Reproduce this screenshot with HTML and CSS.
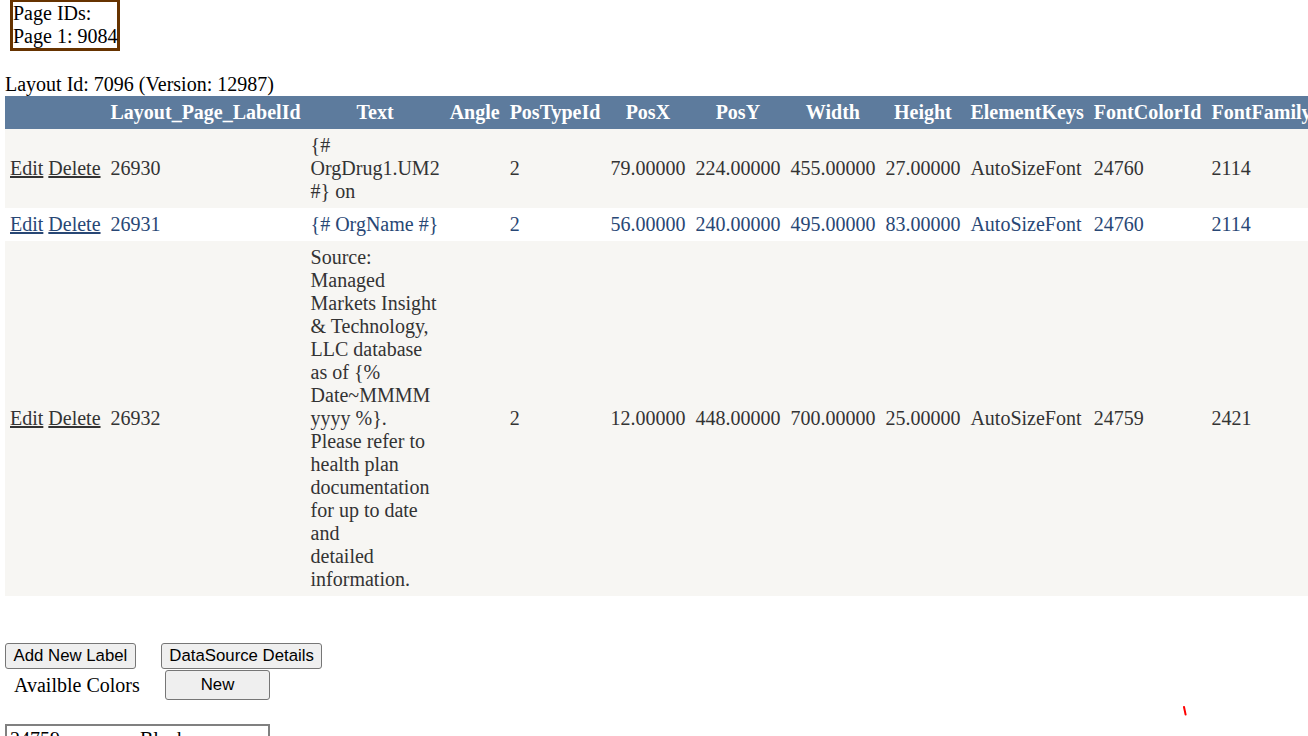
FILE: index.html
```html
<!DOCTYPE html>
<html>
<head>
<meta charset="utf-8">
<title>Layout Labels</title>
<link rel="stylesheet" href="styles.css">
</head>
<body>
<div class="page-ids">Page IDs:<br>Page 1: 9084</div>
<div class="layout-id">Layout Id: 7096 (Version: 12987)</div>
<table class="grid">
  <thead>
    <tr>
      <th></th>
      <th>Layout_Page_LabelId</th>
      <th>Text</th>
      <th>Angle</th>
      <th>PosTypeId</th>
      <th>PosX</th>
      <th>PosY</th>
      <th>Width</th>
      <th>Height</th>
      <th>ElementKeys</th>
      <th>FontColorId</th>
      <th>FontFamilyId</th>
      <th>FontSize</th>
      <th>FontStyleId</th>
      <th>AlignmentId</th>
    </tr>
  </thead>
  <tbody>
    <tr class="row">
      <td><a href="#">Edit</a> <a href="#">Delete</a></td>
      <td>26930</td>
      <td class="text">{# OrgDrug1.UM2 #} on</td>
      <td></td>
      <td>2</td>
      <td>79.00000</td>
      <td>224.00000</td>
      <td>455.00000</td>
      <td>27.00000</td>
      <td>AutoSizeFont</td>
      <td>24760</td>
      <td>2114</td>
      <td>14</td>
      <td>1</td>
      <td>1</td>
    </tr>
    <tr class="alt">
      <td><a href="#">Edit</a> <a href="#">Delete</a></td>
      <td>26931</td>
      <td class="text">{# OrgName #}</td>
      <td></td>
      <td>2</td>
      <td>56.00000</td>
      <td>240.00000</td>
      <td>495.00000</td>
      <td>83.00000</td>
      <td>AutoSizeFont</td>
      <td>24760</td>
      <td>2114</td>
      <td>28</td>
      <td>1</td>
      <td>1</td>
    </tr>
    <tr class="row">
      <td><a href="#">Edit</a> <a href="#">Delete</a></td>
      <td>26932</td>
      <td class="text">Source: Managed Markets Insight &amp; Technology, LLC database as of {% Date~MMMM yyyy %}. Please refer to health plan documentation for up to date and<br>detailed information.</td>
      <td></td>
      <td>2</td>
      <td>12.00000</td>
      <td>448.00000</td>
      <td>700.00000</td>
      <td>25.00000</td>
      <td>AutoSizeFont</td>
      <td>24759</td>
      <td>2421</td>
      <td>8</td>
      <td>1</td>
      <td>1</td>
    </tr>
  </tbody>
</table>

<div class="actions">
  <div class="btn-row">
    <button type="button" class="btn">Add New Label</button>
    <button type="button" class="btn">DataSource Details</button>
  </div>
  <div class="colors-row">
    <span class="colors-label">Availble Colors</span>
    <button type="button" class="btn new-btn">New</button>
  </div>
</div>

<div class="color-list">
  <span>24759</span><span>Black</span>
  <span>24760</span><span>White</span>
  <span>24761</span><span>Blue</span>
</div>

<svg class="mark" width="6" height="10" viewBox="0 0 6 10"><line x1="2" y1="1" x2="3.6" y2="8.6" stroke="#ff0000" stroke-width="2" stroke-linecap="round"/></svg>
</body>
</html>
```

FILE: styles.css
```css
html {
  overflow: hidden;
}

body {
  margin: 0;
  padding: 0 5px;
  font-family: "Liberation Serif", "Times New Roman", serif;
  font-size: 20px;
  color: #000;
  background: #fff;
}

.page-ids {
  width: fit-content;
  margin-top: -1px;
  margin-left: 5px;
  border: 3px solid #663300;
}

.layout-id {
  margin-top: 22px;
}

.grid {
  border-collapse: collapse;
  border: 0;
}

.grid th {
  background: #5d7b9d;
  color: #fff;
  font-weight: bold;
  padding: 5px;
  white-space: nowrap;
  text-align: center;
}

.grid td {
  padding: 5px;
  white-space: nowrap;
  text-align: left;
}

.grid td.text {
  white-space: normal;
}

.grid .row {
  background: #f7f6f3;
  color: #333333;
}

.grid .alt {
  background: #ffffff;
  color: #284775;
}

.grid a {
  color: inherit;
  text-decoration: underline;
}

.actions {
  margin-top: 47px;
  display: flex;
  flex-direction: column;
  gap: 1px;
}

.btn-row {
  display: flex;
  gap: 25px;
}

.btn {
  font-family: "Liberation Sans", Arial, sans-serif;
  font-size: 16.8px;
  height: 26px;
  padding: 0 7.5px;
  border: 1px solid #767676;
  border-radius: 3px;
  background: #efefef;
  color: #000;
}

.colors-row {
  display: flex;
  align-items: center;
}

.colors-label {
  width: 160px;
  padding-left: 9px;
  box-sizing: border-box;
}

.new-btn {
  width: 105px;
  height: 30px;
}

.color-list {
  margin-top: 24px;
  width: 265px;
  box-sizing: border-box;
  border: 2px solid #808080;
  padding: 2px 3px;
  display: grid;
  grid-template-columns: 130px 1fr;
}

.mark {
  position: absolute;
  left: 1182px;
  top: 706px;
}
```
